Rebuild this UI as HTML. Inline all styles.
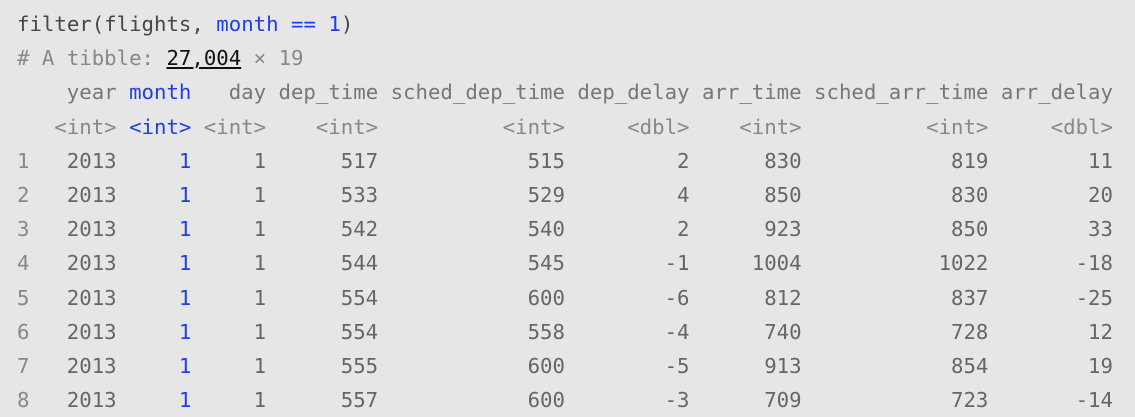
<!DOCTYPE html>
<html><head><meta charset="utf-8"><style>
body{margin:0;background:#e6e6e6;width:1135px;height:413px;overflow:hidden}
.w{position:absolute;left:17px;top:7px;font-family:"DejaVu Sans Mono","Liberation Mono",monospace;font-size:20.7px;color:#666}
.r{height:34.2px;line-height:34.2px;white-space:pre;display:flex}
.r span{display:inline-block;text-align:right;margin-right:1ch}
.c0{width:2ch;text-align:left!important}.c1,.c2,.c3{width:5ch}.c4,.c7{width:8ch}.c5,.c8{width:14ch}.c6,.c9{width:9ch}
.b{color:#1f3fe6!important}
.t span{color:#888}
.g{color:#888}
</style></head><body><div class="w">
<div class="r" style="color:#474747">filter(flights, <span style="color:#1f3fe6;margin:0;text-align:left">month == 1</span>)</div>
<div class="r" style="color:#888"># A tibble: <span style="color:#111;text-decoration:underline;margin:0;text-align:left">27,004</span> × 19</div>
<div class="r" style="color:#777"><span class="c0"></span><span class="c1">year</span><span class="c2 b">month</span><span class="c3">day</span><span class="c4">dep_time</span><span class="c5">sched_dep_time</span><span class="c6">dep_delay</span><span class="c7">arr_time</span><span class="c8">sched_arr_time</span><span class="c9">arr_delay</span></div>
<div class="r t"><span class="c0"></span><span class="c1">&lt;int&gt;</span><span class="c2 b">&lt;int&gt;</span><span class="c3">&lt;int&gt;</span><span class="c4">&lt;int&gt;</span><span class="c5">&lt;int&gt;</span><span class="c6">&lt;dbl&gt;</span><span class="c7">&lt;int&gt;</span><span class="c8">&lt;int&gt;</span><span class="c9">&lt;dbl&gt;</span></div>
<div class="r"><span class="c0 g">1</span><span class="c1">2013</span><span class="c2 b">1</span><span class="c3">1</span><span class="c4">517</span><span class="c5">515</span><span class="c6">2</span><span class="c7">830</span><span class="c8">819</span><span class="c9">11</span></div>
<div class="r"><span class="c0 g">2</span><span class="c1">2013</span><span class="c2 b">1</span><span class="c3">1</span><span class="c4">533</span><span class="c5">529</span><span class="c6">4</span><span class="c7">850</span><span class="c8">830</span><span class="c9">20</span></div>
<div class="r"><span class="c0 g">3</span><span class="c1">2013</span><span class="c2 b">1</span><span class="c3">1</span><span class="c4">542</span><span class="c5">540</span><span class="c6">2</span><span class="c7">923</span><span class="c8">850</span><span class="c9">33</span></div>
<div class="r"><span class="c0 g">4</span><span class="c1">2013</span><span class="c2 b">1</span><span class="c3">1</span><span class="c4">544</span><span class="c5">545</span><span class="c6">-1</span><span class="c7">1004</span><span class="c8">1022</span><span class="c9">-18</span></div>
<div class="r"><span class="c0 g">5</span><span class="c1">2013</span><span class="c2 b">1</span><span class="c3">1</span><span class="c4">554</span><span class="c5">600</span><span class="c6">-6</span><span class="c7">812</span><span class="c8">837</span><span class="c9">-25</span></div>
<div class="r"><span class="c0 g">6</span><span class="c1">2013</span><span class="c2 b">1</span><span class="c3">1</span><span class="c4">554</span><span class="c5">558</span><span class="c6">-4</span><span class="c7">740</span><span class="c8">728</span><span class="c9">12</span></div>
<div class="r"><span class="c0 g">7</span><span class="c1">2013</span><span class="c2 b">1</span><span class="c3">1</span><span class="c4">555</span><span class="c5">600</span><span class="c6">-5</span><span class="c7">913</span><span class="c8">854</span><span class="c9">19</span></div>
<div class="r"><span class="c0 g">8</span><span class="c1">2013</span><span class="c2 b">1</span><span class="c3">1</span><span class="c4">557</span><span class="c5">600</span><span class="c6">-3</span><span class="c7">709</span><span class="c8">723</span><span class="c9">-14</span></div>
</div></body></html>
